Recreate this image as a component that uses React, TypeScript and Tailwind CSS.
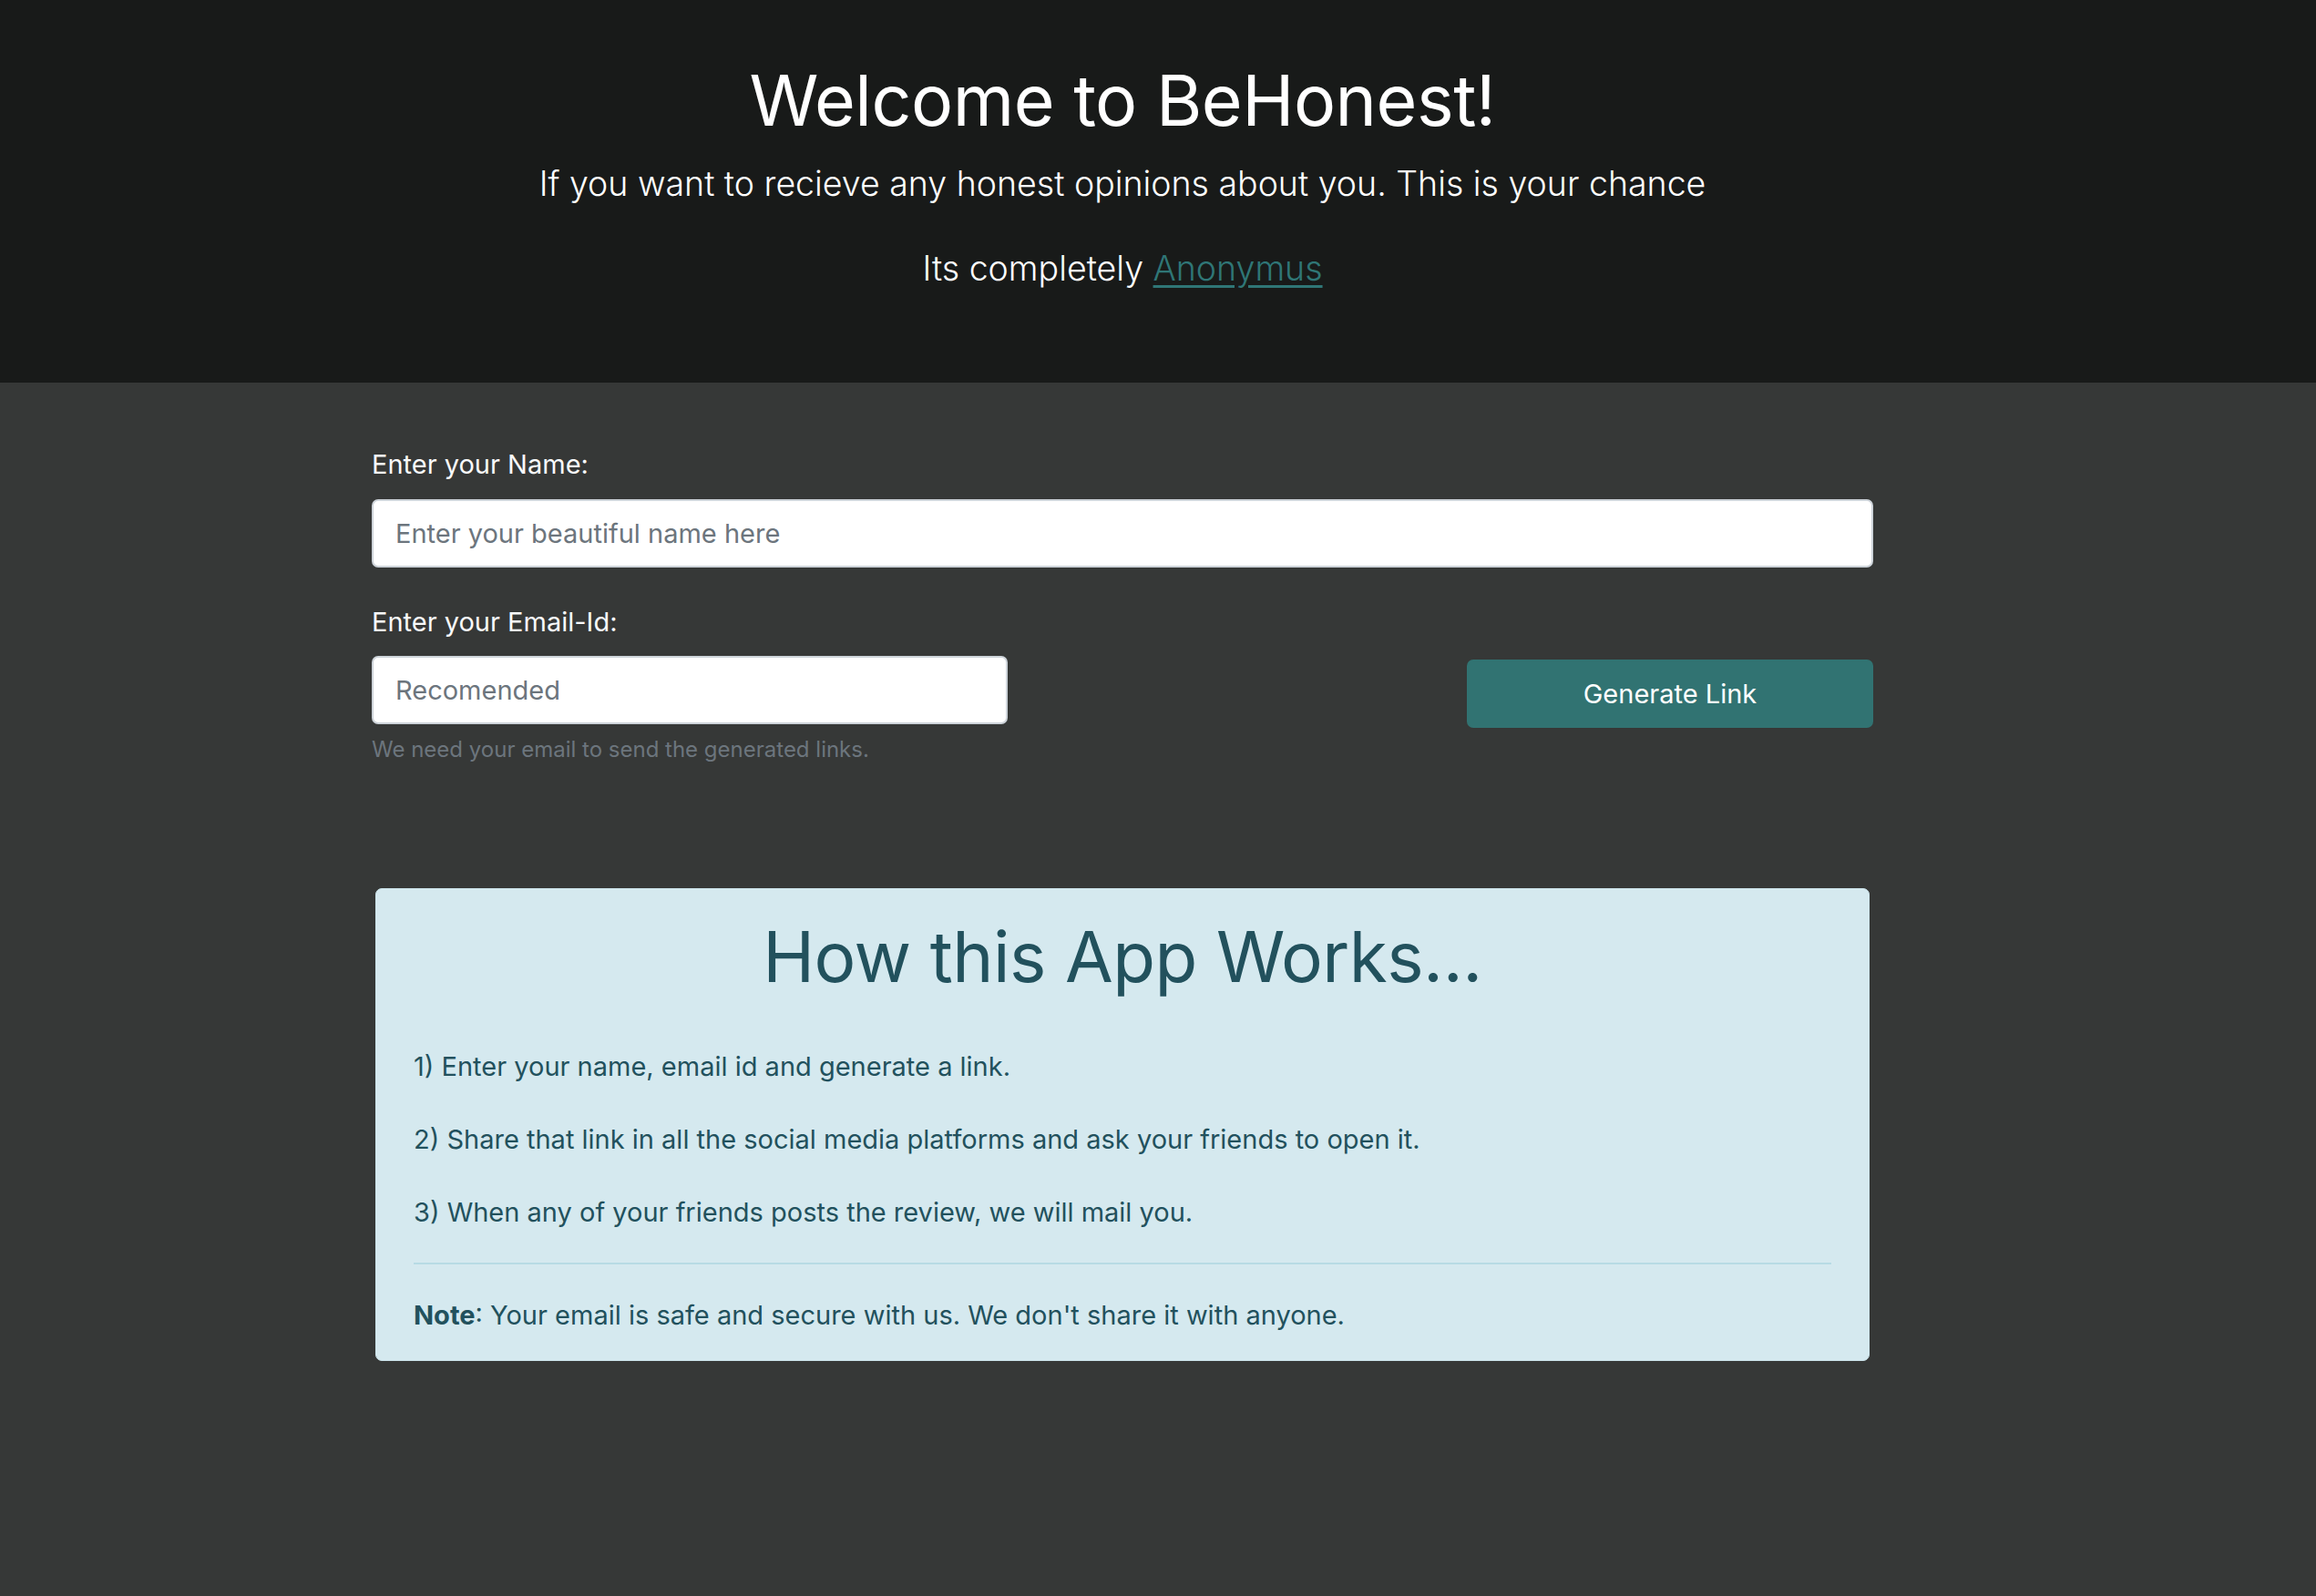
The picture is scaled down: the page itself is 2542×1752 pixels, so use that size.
export default function App() {
  const font = { fontFamily: "Inter, 'Noto Sans', sans-serif" };
  return (
    <div className="min-h-screen bg-[#363837]" style={font}>
      <header className="h-[420px] bg-[#181a19]">
        <div className="w-[2464px] pt-[64px] text-center text-white">
          <h1 className="text-[77px] font-normal leading-[1.2] tracking-[-0.5px]">Welcome to BeHonest!</h1>
          <p className="mt-[18px] text-[37.5px] font-light leading-[1.5]">
            If you want to recieve any honest opinions about you. This is your chance
          </p>
          <p className="mt-[36px] text-[37.5px] font-light leading-[1.5]">
            Its completely{" "}
            <a href="#" className="text-[#2f7676] underline underline-offset-[5px]">
              Anonymus
            </a>
          </p>
        </div>
      </header>

      <main className="w-[2464px] pb-[200px]">
        <form className="mx-auto w-[1648px] pt-[68px]">
          <label className="block text-[29px] leading-[1.5] text-[#f8f9fa]">Enter your Name:</label>
          <input
            type="text"
            placeholder="Enter your beautiful name here"
            className="mt-[16px] block h-[75px] w-full rounded-[7px] border-2 border-[#ced4da] bg-white px-[24px] text-[29px] text-[#495057] placeholder:text-[#6c757d]"
          />

          <label className="mt-[38px] block text-[29px] leading-[1.5] text-[#f8f9fa]">Enter your Email-Id:</label>
          <div className="flex items-start justify-between">
            <div className="w-[698px]">
              <input
                type="email"
                placeholder="Recomended"
                className="mt-[16px] block h-[75px] w-full rounded-[7px] border-2 border-[#ced4da] bg-white px-[24px] text-[29px] text-[#495057] placeholder:text-[#6c757d]"
              />
              <small className="mt-[10px] block text-[24px] leading-[1.5] text-[#6c757d]">
                We need your email to send the generated links.
              </small>
            </div>
            <button
              type="button"
              className="mt-[20px] h-[75px] w-[446px] rounded-[7px] bg-[#317372] text-[29px] text-white"
            >
              Generate Link
            </button>
          </div>
        </form>

        <section className="mx-auto mt-[134px] w-[1640px] rounded-[7px] border border-[#cde5ec] bg-[#d5e9ef] px-[41px] pt-[29px] pb-[28px] text-[#22515d]">
          <h2 className="text-center text-[76.5px] font-normal leading-[1.2] tracking-[-0.5px]">How this App Works...</h2>
          <p className="mt-[52px] text-[29px] leading-[1.5]">1) Enter your name, email id and generate a link.</p>
          <p className="mt-[36.5px] text-[29px] leading-[1.5]">
            2) Share that link in all the social media platforms and ask your friends to open it.
          </p>
          <p className="mt-[36.5px] text-[29px] leading-[1.5]">3) When any of your friends posts the review, we will mail you.</p>
          <hr className="mt-[33.5px] border-t-2 border-[#b7dbe4]" />
          <p className="mt-[34px] text-[29px] leading-[1.5]">
            <strong className="font-bold">Note</strong>: Your email is safe and secure with us. We don't share it with anyone.
          </p>
        </section>
      </main>
    </div>
  );
}
